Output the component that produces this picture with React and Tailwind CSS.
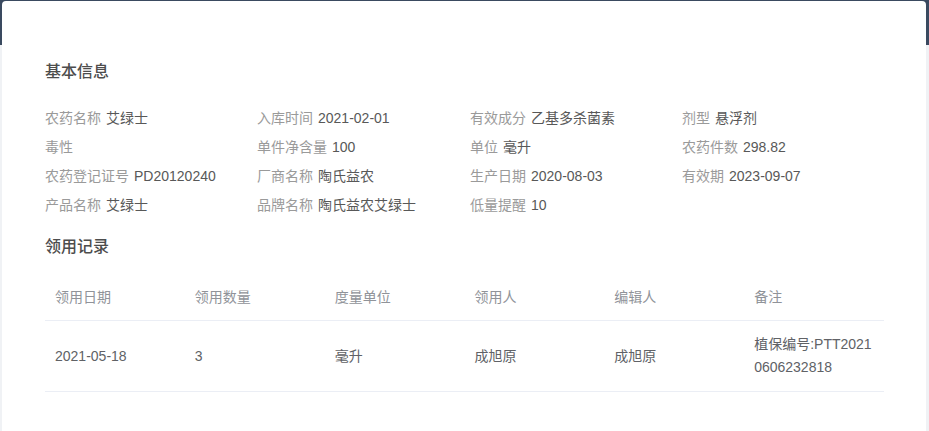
import React from "react";

const font = { fontFamily: '"Liberation Sans", "Noto Sans CJK SC", sans-serif' };

const info = [
  [["农药名称", "艾绿士"], ["入库时间", "2021-02-01"], ["有效成分", "乙基多杀菌素"], ["剂型", "悬浮剂"]],
  [["毒性", ""], ["单件净含量", "100"], ["单位", "毫升"], ["农药件数", "298.82"]],
  [["农药登记证号", "PD20120240"], ["厂商名称", "陶氏益农"], ["生产日期", "2020-08-03"], ["有效期", "2023-09-07"]],
  [["产品名称", "艾绿士"], ["品牌名称", "陶氏益农艾绿士"], ["低量提醒", "10"], null],
];

const headers = ["领用日期", "领用数量", "度量单位", "领用人", "编辑人", "备注"];

export default function App() {
  return (
    <div className="relative w-[929px] h-[431px] overflow-hidden bg-[#f0f2f5]" style={font}>
      <div className="h-[45px] bg-[#3a4a60]" />
      <div className="absolute left-[2px] top-[1px] w-[924px] h-[480px] bg-white rounded-[4px]">
        <div className="pl-[43px] pr-[42px] pt-[59px]">
          <div className="text-[16px] leading-[24px] font-medium text-[#4d4d4d]">基本信息</div>
          <div className="mt-[20px] grid grid-cols-[212px_213px_212px_1fr]">
            {info.map((row, ri) =>
              row.map((cell, ci) => (
                <div key={ri + "-" + ci} className="h-[29px] leading-[29px] text-[14px] whitespace-nowrap">
                  {cell && (
                    <>
                      <span className="text-[#9a9a9a]">{cell[0]}</span>
                      {cell[1] && <span className="ml-[5px] text-[#585858]">{cell[1]}</span>}
                    </>
                  )}
                </div>
              ))
            )}
          </div>
          <div className="mt-[15px] text-[16px] leading-[24px] font-medium text-[#4d4d4d]">领用记录</div>
          <div className="mt-[15px] w-[839px] text-[14px]">
            <div className="grid grid-cols-6 border-b border-[#ebeef5] h-[47px]">
              {headers.map((h) => (
                <div key={h} className="px-[10px] leading-[46px] text-[#909399]">{h}</div>
              ))}
            </div>
            <div className="grid grid-cols-6 border-b border-[#ebeef5] h-[71px] items-center text-[#606266]">
              <div className="px-[10px] leading-[23px]">2021-05-18</div>
              <div className="px-[10px] leading-[23px]">3</div>
              <div className="px-[10px] leading-[23px]">毫升</div>
              <div className="px-[10px] leading-[23px]">成旭原</div>
              <div className="px-[10px] leading-[23px]">成旭原</div>
              <div className="px-[10px] leading-[23px]">
                <div>植保编号:PTT2021</div>
                <div>0606232818</div>
              </div>
            </div>
          </div>
        </div>
      </div>
    </div>
  );
}
